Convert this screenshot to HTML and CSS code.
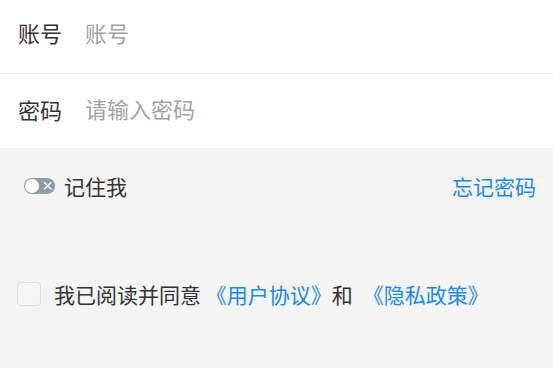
FILE: index.html
```html
<!DOCTYPE html>
<html lang="zh-CN">
<head>
<meta charset="utf-8">
<link rel="stylesheet" href="styles.css">
</head>
<body>
<div class="page">
  <div class="form">
    <label class="row row-first">
      <span class="label">账号</span>
      <input class="field" type="text" placeholder="账号">
    </label>
    <label class="row row-second">
      <span class="label">密码</span>
      <input class="field" type="password" placeholder="请输入密码">
    </label>
  </div>
  <div class="options">
    <div class="remember-row">
      <div class="remember">
        <span class="toggle">
          <svg width="31" height="16" viewBox="0 0 31 16">
            <rect x="0" y="0" width="31" height="16" rx="8" fill="#8e9ca8"/>
            <circle cx="8" cy="8" r="7" fill="#ffffff"/>
            <path d="M20.5 4.5 L27 11 M27 4.5 L20.5 11" stroke="#ffffff" stroke-width="1.3" stroke-linecap="round"/>
          </svg>
        </span>
        <span class="remember-text">记住我</span>
      </div>
      <a class="link forgot">忘记密码</a>
    </div>
    <div class="agree-row">
      <span class="checkbox"></span>
      <span class="agree-text">我已阅读并同意 <a class="link">《用户协议》</a>和<a class="link second-link">《隐私政策》</a></span>
    </div>
  </div>
</div>
</body>
</html>
```
FILE: styles.css
```css
* { box-sizing: border-box; }
html, body {
  margin: 0;
  padding: 0;
  height: 100%;
  background: #f4f4f4;
  font-family: "Noto Sans CJK SC", "Noto Sans", sans-serif;
}
.page {
  width: 553px;
  min-height: 368px;
  background: #f4f4f4;
}
.form {
  background: #ffffff;
}
.row {
  display: flex;
  align-items: center;
  height: 74px;
  padding: 0 18px;
}
.row-first {
  border-bottom: 1px solid #ebebeb;
  padding-bottom: 9px;
}
.row-second {
  padding-bottom: 5px;
}
.label {
  font-size: 22px;
  color: #333333;
  width: 67px;
  flex-shrink: 0;
  line-height: 1;
}
.field {
  flex: 1;
  border: none;
  outline: none;
  background: transparent;
  font-family: inherit;
  font-size: 22px;
  color: #333333;
  padding: 0;
  margin: 0;
  line-height: 1.2;
}
.field::placeholder {
  color: #a3a3a3;
}
.options {
  padding: 23px 17px 0 24px;
}
.remember-row {
  display: flex;
  align-items: center;
  justify-content: space-between;
  height: 30px;
}
.remember {
  display: flex;
  align-items: center;
}
.toggle {
  display: flex;
  width: 31px;
  height: 16px;
  margin-right: 9px;
}
.remember-text {
  font-size: 21px;
  color: #333333;
  line-height: 1;
}
.link {
  color: #1a89e8;
  text-decoration: none;
}
.forgot {
  font-size: 21px;
  line-height: 1;
}
.agree-row {
  display: flex;
  align-items: center;
  margin-top: 78px;
  margin-left: -7px;
  height: 30px;
}
.checkbox {
  width: 24px;
  height: 24px;
  border: 1px solid #dcdcdc;
  border-radius: 4px;
  background: #f6f6f6;
  margin-right: 13px;
  flex-shrink: 0;
}
.agree-text {
  font-size: 21px;
  color: #333333;
  line-height: 1;
  white-space: nowrap;
}
.second-link {
  margin-left: 10px;
}
```
